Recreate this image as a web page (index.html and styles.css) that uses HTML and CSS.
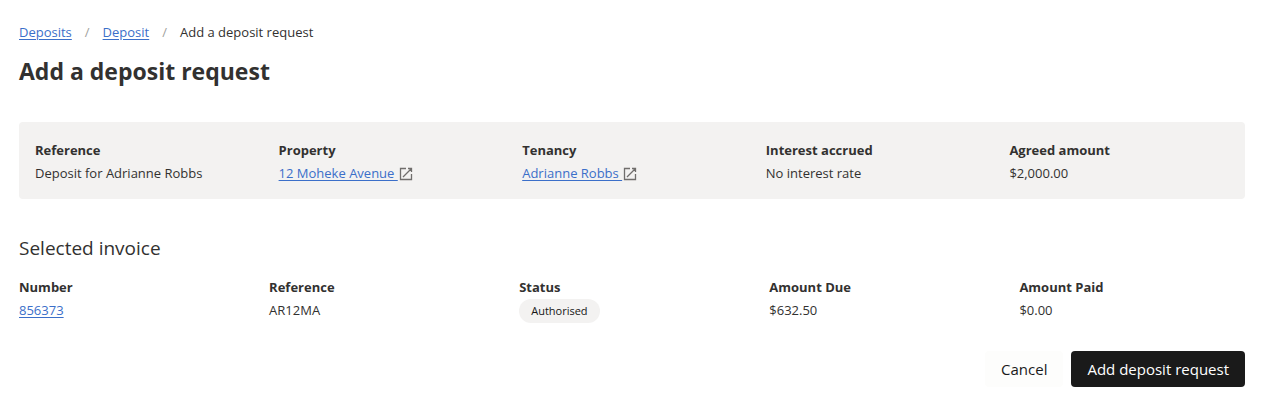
FILE: index.html
```html
<!DOCTYPE html>
<html lang="en">
<head>
    <meta charset="UTF-8">
    <meta name="viewport" content="width=device-width, initial-scale=1.0">
    <title>Add a deposit request</title>
    <link rel="stylesheet" href="styles.css">
</head>
<body>

<nav class="breadcrumb" aria-label="Breadcrumb">
    <a href="#">Deposits</a>
    <span class="separator">/</span>
    <a href="#">Deposit</a>
    <span class="separator">/</span>
    <span>Add a deposit request</span>
</nav>

<main>
    <h1>Add a deposit request</h1>

    <dl class="summary">
        <div>
            <dt>Reference</dt>
            <dd>Deposit for Adrianne Robbs</dd>
        </div>
        <div>
            <dt>Property</dt>
            <dd>
                <a class="external" href="#">12 Moheke Avenue
                    <svg viewBox="0 0 14 14" aria-hidden="true"><path d="M7 1.500H1.500v11h11V7M9 1.500h3.500V5M12.500 1.500L4 10"/></svg></a>
            </dd>
        </div>
        <div>
            <dt>Tenancy</dt>
            <dd>
                <a class="external" href="#">Adrianne Robbs
                    <svg viewBox="0 0 14 14" aria-hidden="true"><path d="M7 1.500H1.500v11h11V7M9 1.500h3.500V5M12.500 1.500L4 10"/></svg></a>
            </dd>
        </div>
        <div>
            <dt>Interest accrued</dt>
            <dd>No interest rate</dd>
        </div>
        <div>
            <dt>Agreed amount</dt>
            <dd>$2,000.00</dd>
        </div>
    </dl>

    <h2>Selected invoice</h2>

    <table class="invoice">
        <thead>
            <tr>
                <th scope="col">Number</th>
                <th scope="col">Reference</th>
                <th scope="col">Status</th>
                <th scope="col">Amount Due</th>
                <th scope="col">Amount Paid</th>
            </tr>
        </thead>
        <tbody>
            <tr>
                <td><a href="#">856373</a></td>
                <td>AR12MA</td>
                <td><span class="status">Authorised</span></td>
                <td>$632.50</td>
                <td>$0.00</td>
            </tr>
        </tbody>
    </table>

    <div class="actions">
        <button type="button" class="cancel">Cancel</button>
        <button type="submit" class="submit">Add deposit request</button>
    </div>
</main>

</body>
</html>
```

FILE: styles.css
```css
* {
    box-sizing: border-box;
}

body {
    font-family: 'Segoe UI', 'Open Sans', 'Noto Sans', sans-serif;
    margin: 0;
    padding: 22px 21px 24px 19px;
    background-color: #fff;
    color: #323130;
    font-size: 13px;
    line-height: 20px;
}

a {
    color: #3b6fc9;
    text-underline-offset: 2px;
}

.breadcrumb {
    display: flex;
    gap: 13px;
}

.separator {
    color: #a19f9d;
}

h1 {
    margin: 13px 0 35px;
    font-size: 23px;
    font-weight: 700;
    line-height: 32px;
}

.summary {
    display: grid;
    grid-template-columns: repeat(5, 1fr);
    gap: 24px;
    margin: 0;
    padding: 17px 16px 15px;
    background-color: #f3f2f1;
    border-radius: 4px;
}

dt {
    margin-bottom: 1px;
    font-weight: 700;
    line-height: 22px;
}

dd {
    margin: 0;
    line-height: 22px;
}

.external svg {
    width: 14px;
    height: 14px;
    margin-left: 1px;
    vertical-align: -3px;
    fill: none;
    stroke: #706e6c;
    stroke-width: 1.3;
}

h2 {
    margin: 35px 0 15px;
    font-size: 19px;
    font-weight: 400;
    line-height: 28px;
}

.invoice {
    width: 100%;
    border-collapse: collapse;
    table-layout: fixed;
}

th,
td {
    padding: 0;
    text-align: left;
    vertical-align: top;
}

th {
    padding-bottom: 3px;
    font-weight: 700;
}

th:not(:last-child) {
    width: 20.4%;
}

.status {
    display: block;
    width: fit-content;
    margin-top: -1px;
    padding: 2px 12px;
    background-color: #f3f2f1;
    border-radius: 12px;
    color: #161616;
    font-size: 11px;
}

.actions {
    display: flex;
    justify-content: flex-end;
    gap: 8px;
    margin-top: 28px;
}

button {
    height: 36px;
    padding: 0 16px;
    border: none;
    border-radius: 4px;
    font-family: inherit;
    font-size: 15px;
    cursor: pointer;
}

.cancel {
    background-color: #fdfdfc;
    color: #1a1a1a;
}

.submit {
    background-color: #1a1a1a;
    color: #fff;
}
```
